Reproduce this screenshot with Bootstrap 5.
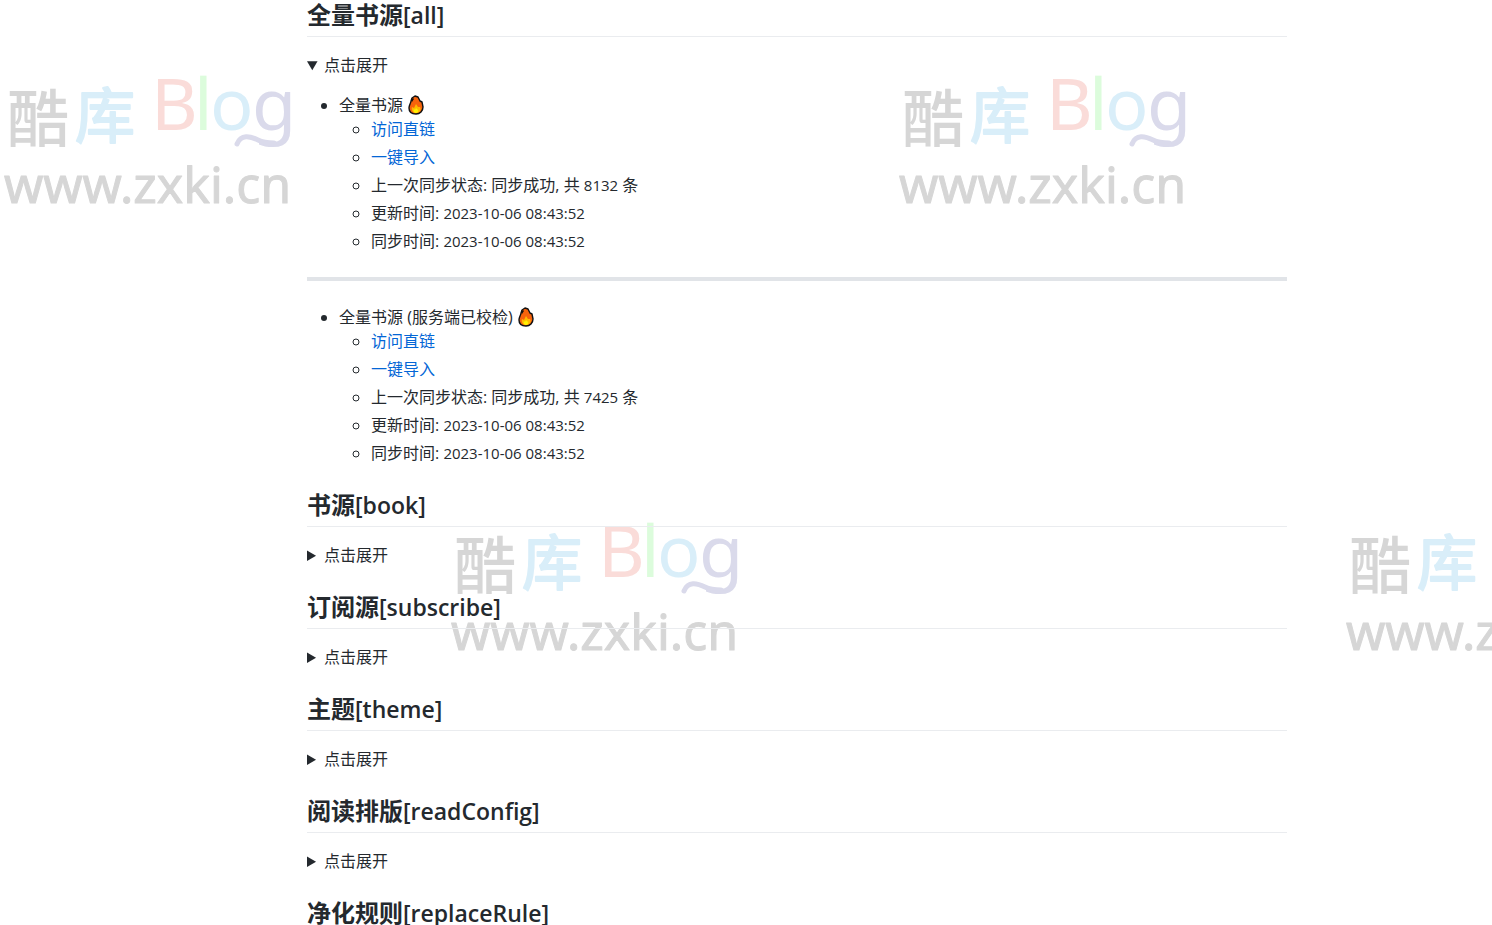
<!DOCTYPE html>
<html lang="zh-CN">
<head>
<meta charset="utf-8">
<meta name="viewport" content="width=device-width, initial-scale=1">
<title>书源</title>
<link href="https://cdn.jsdelivr.net/npm/bootstrap@5.3.0/dist/css/bootstrap.min.css" rel="stylesheet">
<style>
  body { font-family: "Open Sans", "Noto Sans CJK SC", sans-serif; font-size: 16px; line-height: 24px; color: #24292e; background: #fff; }
  .page { padding-left: 102px; }
  .article { max-width: 980px; }
  .article h2 { font-size: 24px; line-height: 30px; font-weight: 700; margin: 25px 0 16px; padding-bottom: 6px; border-bottom: 1px solid #eaecef; white-space: nowrap; }
  .article section:first-child h2 { margin-top: 0; }
  .article h2 span { font-size: 23px; font-weight: 600; }
  .article ul { padding-left: 32px; margin: 0; }
  .article details > ul { margin-top: 16px; }
  .article ul ul li + li { margin-top: 4px; }
  .article li, .article summary { line-height: 24px; }
  .article a { color: #0366d6; text-decoration: none; }
  .article a:hover { text-decoration: underline; }
  .article hr { height: 4px; margin: 24px 0; border: 0; background: #e1e4e8; opacity: 1; }
  .latin { font-size: 15px; }
  .fire { width: 18px; height: 20px; vertical-align: -4px; }
  .watermark { z-index: -1; }
  .wm-name { font: 500 62px "Noto Sans CJK SC", sans-serif; }
  .wm-store { font: 400 60px "Noto Sans CJK SC", sans-serif; fill: #d9eef9; stroke: #d9eef9; stroke-width: 2px; stroke-linejoin: round; }
  .wm-blog { font: 72px "Noto Sans", sans-serif; }
  .wm-site { font: 50px "Noto Sans", sans-serif; fill: #d6d6d6; stroke: #d6d6d6; stroke-width: 1px; stroke-linejoin: round; }
</style>
</head>
<body>
<div class="position-relative vh-100 overflow-hidden">
  <svg class="watermark position-absolute top-0 start-0 w-100 h-100">
    <defs>
      <g id="mark">
        <text class="wm-name" x="7" y="142" fill="#d6d6d6">酷</text>
        <text class="wm-store" x="75" y="138">库</text>
        <text class="wm-blog" y="130"><tspan x="151" fill="#fadcd9">B</tspan><tspan x="194" fill="#dcfcdc">l</tspan><tspan x="210" fill="#d9eef9">o</tspan><tspan x="252" fill="#dadaeb">g</tspan></text>
        <path d="M237 144C241 134 250 136 258 140C264 143 269 143 274 143" fill="none" stroke="#dadaeb" stroke-width="5" stroke-linecap="round"/>
        <text class="wm-site" x="4" y="203">www.zxki.cn</text>
      </g>
    </defs>
    <use href="#mark"/>
    <use href="#mark" x="895"/>
    <use href="#mark" x="447" y="447"/>
    <use href="#mark" x="1342" y="447"/>
  </svg>

  <svg class="d-none">
    <symbol id="fire" viewBox="0 0 18 20">
      <path d="M5 3L8 1L11 2L13 6L15 7L16 12C16 16 13 19 9 19C4 19 2 16 2 13C2 10 4 8 4 6Z" fill="#f7630c" stroke="#111" stroke-width="1.4" stroke-linejoin="round"/>
      <path d="M6 3L7 4L5 7L4 5Z" fill="#111"/>
      <path d="M5 12L7 13L9 9L11 12L13 12C15 15 12 18 9 18C6 18 4 15 5 12Z" fill="#ffb900"/>
      <path d="M7 14L8 15L9 13L11 15C12 17 10 18 9 18C7 18 6 16 7 14Z" fill="#fff100"/>
    </symbol>
  </svg>

  <div class="page">
    <main class="article mx-auto">
      <section>
        <h2>全量书源<span>[all]</span></h2>
        <details open>
          <summary>点击展开</summary>
          <ul>
            <li>全量书源 <svg class="fire"><use href="#fire"/></svg>
              <ul>
                <li><a href="#all">访问直链</a></li>
                <li><a href="#import-all">一键导入</a></li>
                <li>上一次同步状态: 同步成功, 共 <span class="latin">8132</span> 条</li>
                <li>更新时间: <span class="latin">2023-10-06 08:43:52</span></li>
                <li>同步时间: <span class="latin">2023-10-06 08:43:52</span></li>
              </ul>
            </li>
          </ul>
          <hr>
          <ul>
            <li>全量书源 (服务端已校检) <svg class="fire"><use href="#fire"/></svg>
              <ul>
                <li><a href="#checked">访问直链</a></li>
                <li><a href="#import-checked">一键导入</a></li>
                <li>上一次同步状态: 同步成功, 共 <span class="latin">7425</span> 条</li>
                <li>更新时间: <span class="latin">2023-10-06 08:43:52</span></li>
                <li>同步时间: <span class="latin">2023-10-06 08:43:52</span></li>
              </ul>
            </li>
          </ul>
        </details>
      </section>
      <section>
        <h2>书源<span>[book]</span></h2>
        <details><summary>点击展开</summary></details>
      </section>
      <section>
        <h2>订阅源<span>[subscribe]</span></h2>
        <details><summary>点击展开</summary></details>
      </section>
      <section>
        <h2>主题<span>[theme]</span></h2>
        <details><summary>点击展开</summary></details>
      </section>
      <section>
        <h2>阅读排版<span>[readConfig]</span></h2>
        <details><summary>点击展开</summary></details>
      </section>
      <section>
        <h2>净化规则<span>[replaceRule]</span></h2>
      </section>
    </main>
  </div>
</div>
<script src="https://cdn.jsdelivr.net/npm/bootstrap@5.3.0/dist/js/bootstrap.bundle.min.js"></script>
</body>
</html>
